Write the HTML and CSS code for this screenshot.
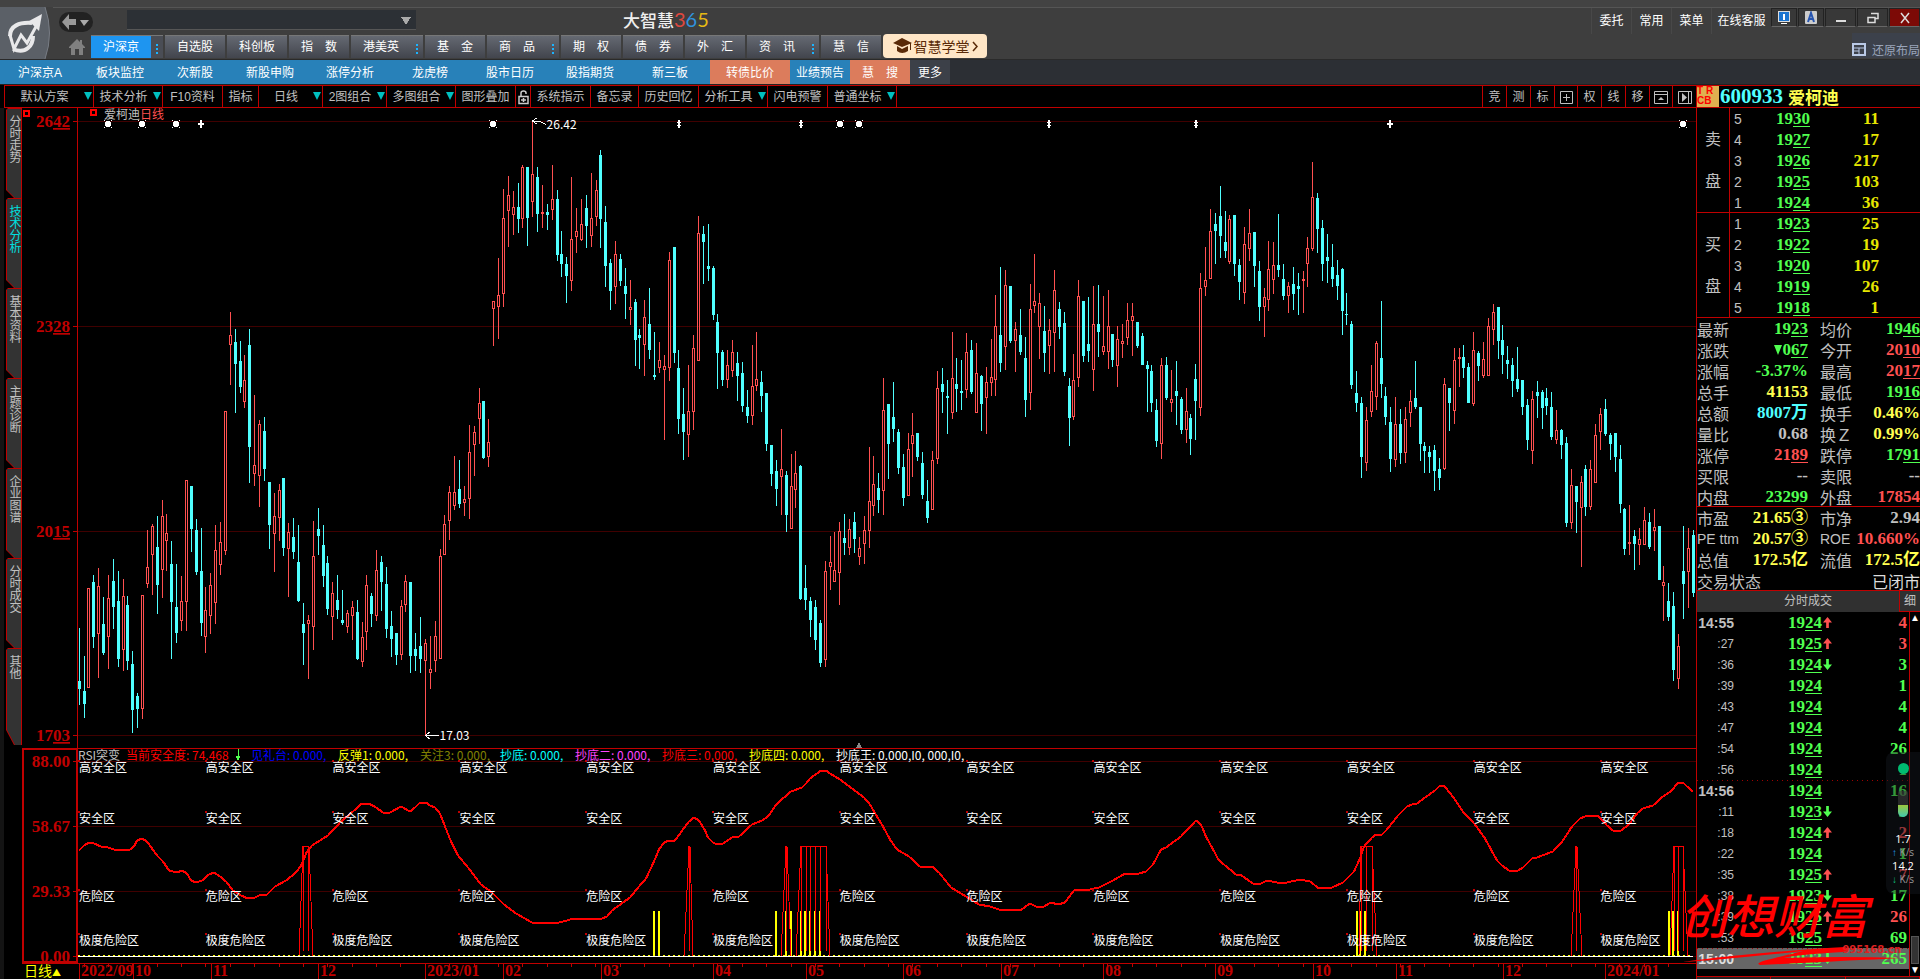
FILE: index.html
```html
<!DOCTYPE html>
<html lang="zh-CN">
<head>
	<meta charset="UTF-8">
	<title>大智慧365</title>
	<link rel="stylesheet" href="styles.css">
	<script src="chart.js"></script>
</head>
<body>
<div class="app">
	<header class="top">
		<div class="logo">
			<svg width="52" height="52" viewBox="0 0 52 52">
				<path d="M0 0H45Q54 26 45 52H0Z" fill="#5b6067"/>
				<path d="M45 0Q54 26 45 52" fill="none" stroke="#777c84"/>
				<path d="M10 29C10 19 19 15 32 16" fill="none" stroke="#e8e8ea" stroke-width="4"/>
				<path d="M13 42Q22 46 28 41Q33 37 33 29" fill="none" stroke="#e8e8ea" stroke-width="4"/>
				<path d="M10 28L14 42L21 28L27 36L38 16" fill="none" stroke="#e8e8ea" stroke-width="3"/>
				<path d="M29 14L42 7L39 24Z" fill="#e8e8ea"/>
			</svg>
		</div>
		<div class="top-main">
			<div class="bar">
				<button class="back" aria-label="后退">
					<svg width="34" height="20" viewBox="0 0 34 20"><path d="M3 10L10 2V7H17V13H10V18Z" fill="#999"/><path d="M21 8H30L25 14Z" fill="#aaa"/></svg>
				</button>
				<select class="search" aria-label="搜索"><option></option></select>
				<h1 class="title">大智慧<i class="c3">3</i><i class="c6">6</i><i class="c5">5</i></h1>
				<div class="links">
					<a href="#">委托</a><a href="#">常用</a><a href="#">菜单</a><a href="#" class="wide">在线客服</a>
				</div>
				<div class="win">
					<button aria-label="屏幕"><svg width="14" height="14" viewBox="0 0 14 14"><rect x="1" y="0" width="12" height="11" fill="#ddd"/><rect x="2" y="1" width="10" height="9" fill="#1b74d0"/><path d="M6 3H8V9H6ZM4 12H10V13H4Z" fill="#fff"/></svg></button>
					<button aria-label="字体"><svg width="14" height="14" viewBox="0 0 14 14"><rect x="1" y="0" width="12" height="13" rx="1" fill="#ccc"/><path d="M4 11L7 2L10 11M5 8H9" fill="none" stroke="#2554b0" stroke-width="2"/></svg></button>
					<button class="w32" aria-label="最小化"><svg width="12" height="12" viewBox="0 0 12 12"><path d="M1 8H11V10H1Z" fill="#ddd"/></svg></button>
					<button class="w32" aria-label="还原"><svg width="12" height="12" viewBox="0 0 12 12"><path d="M4 1.500H11V6.500H8M1 5.500H8V10.500H1Z" fill="none" stroke="#ddd" stroke-width="1.500"/></svg></button>
					<button class="w32 close" aria-label="关闭"><svg width="12" height="12" viewBox="0 0 12 12"><path d="M2 1L10 11M10 1L2 11" stroke="#ddd" stroke-width="1.500"/></svg></button>
				</div>
			</div>
			<nav class="tabs">
				<a href="#" class="home" aria-label="首页"><svg width="18" height="18" viewBox="0 0 16 18"><path d="M0 9L8 1L11 4V2H13V6L16 9V10H14V17H10V11H6V17H2V10H0Z" fill="#808080"/></svg></a>
				<a href="#" class="tab on dots">沪深京</a>
				<a href="#" class="tab">自选股</a>
				<a href="#" class="tab">科创板</a>
				<a href="#" class="tab">指&emsp;数</a>
				<a href="#" class="tab dots">港美英</a>
				<a href="#" class="tab">基&emsp;金</a>
				<a href="#" class="tab dots">商&emsp;品</a>
				<a href="#" class="tab">期&emsp;权</a>
				<a href="#" class="tab">债&emsp;券</a>
				<a href="#" class="tab">外&emsp;汇</a>
				<a href="#" class="tab dots">资&emsp;讯</a>
				<a href="#" class="tab">慧&emsp;信</a>
				<a href="#" class="school"><svg width="19" height="16" viewBox="0 0 19 16"><path d="M0 5L9 0L19 5L9 9Z" fill="#5a2a08"/><path d="M4 8L9 11L15 8V13Q9 17 4 13Z" fill="#5a2a08"/><path d="M17.500 5V12" stroke="#5a2a08"/></svg>智慧学堂<svg width="6" height="11" viewBox="0 0 6 11"><path d="M1 1L5 5.500L1 10" fill="none" stroke="#5a2a08" stroke-width="1.500"/></svg></a>
				<button class="restore"><svg width="14" height="13" viewBox="0 0 14 13"><path d="M1 1H13V12H1Z" fill="none" stroke="#b9c9e6" stroke-width="2"/><path d="M1 5H13M7 5V12M2 8H7" stroke="#b9c9e6"/></svg>还原布局</button>
			</nav>
		</div>
	</header>

	<nav class="sub">
		<a href="#">沪深京A</a><a href="#">板块监控</a><a href="#" class="w70">次新股</a><a href="#">新股申购</a><a href="#">涨停分析</a><a href="#">龙虎榜</a><a href="#">股市日历</a><a href="#">股指期货</a><a href="#">新三板</a><a href="#" class="hot">转债比价</a><a href="#" class="w60">业绩预告</a><a href="#" class="hot w60">慧&emsp;搜</a><a href="#" class="more">更多</a>
	</nav>

	<div class="work">
		<main class="left">
			<div class="tools">
				<button class="t89 drop">默认方案</button>
				<button class="t69 drop">技术分析</button>
				<button class="t60">F10资料</button>
				<button class="t36">指标</button>
				<button class="t64 drop">日线</button>
				<button class="t64 drop">2图组合</button>
				<button class="t69 drop">多图组合</button>
				<button class="t60">图形叠加</button>
				<button class="t15" aria-label="锁定"><svg width="11" height="15" viewBox="0 0 11 15"><path d="M1 6.500H10V13.500H1ZM3 6V3Q3 1 5.500 1T8 3V4M3 10H8M5.500 8V12" fill="none" stroke="#ccc" stroke-width="1.500"/></svg></button>
				<button class="t60">系统指示</button>
				<button class="t48">备忘录</button>
				<button class="t60">历史回忆</button>
				<button class="t69 drop">分析工具</button>
				<button class="t60">闪电预警</button>
				<button class="t69 drop">普通坐标</button>
				<span class="fill"></span>
				<button class="t24">竞</button>
				<button class="t24">测</button>
				<button class="t24">标</button>
				<button class="t23" aria-label="加"><svg width="13" height="13" viewBox="0 0 13 13"><path d="M.5 .5H12.500V12.500H.5ZM6.500 3V10M3 6.500H10" fill="none" stroke="#c0c0c0"/></svg></button>
				<button class="t24">权</button>
				<button class="t24">线</button>
				<button class="t24">移</button>
				<button class="t23" aria-label="上移"><svg width="14" height="13" viewBox="0 0 14 13"><path d="M.5 .5H13.500V12.500H.5ZM.5 3.500H13.500" fill="none" stroke="#c0c0c0"/><path d="M4 9H10L7 6Z" fill="#c0c0c0"/></svg></button>
				<button class="t23" aria-label="右移"><svg width="14" height="13" viewBox="0 0 14 13"><path d="M.5 .5H13.500V12.500H.5ZM10.500 .5V12.500" fill="none" stroke="#c0c0c0"/><path d="M4 2V11L9 6.500Z" fill="#c0c0c0"/></svg></button>
			</div>
			<div class="body">
				<div class="side">
					<button>分时走势</button>
					<button class="on">技术分析</button>
					<button>基本资料</button>
					<button>主题诊断</button>
					<button>企业图谱</button>
					<button>分时成交</button>
					<button>其他</button>
				</div>
				<div class="chart" id="chart"></div>
			</div>
		</main>

		<aside class="right">
			<div class="stock"><span class="flag"><b>T R</b><b>CB</b></span><span class="code">600933</span><span class="name">爱柯迪</span></div>
			<div class="book">
				<div class="who"><span>卖</span><span>盘</span></div>
				<table class="q">
					<tr><td>5</td><td>19<u>30</u></td><td>11</td></tr>
					<tr><td>4</td><td>19<u>27</u></td><td>17</td></tr>
					<tr><td>3</td><td>19<u>26</u></td><td>217</td></tr>
					<tr><td>2</td><td>19<u>25</u></td><td>103</td></tr>
					<tr><td>1</td><td>19<u>24</u></td><td>36</td></tr>
				</table>
			</div>
			<div class="book">
				<div class="who"><span>买</span><span>盘</span></div>
				<table class="q">
					<tr><td>1</td><td>19<u>23</u></td><td>25</td></tr>
					<tr><td>2</td><td>19<u>22</u></td><td>19</td></tr>
					<tr><td>3</td><td>19<u>20</u></td><td>107</td></tr>
					<tr><td>4</td><td>19<u>19</u></td><td>26</td></tr>
					<tr><td>5</td><td>19<u>18</u></td><td>1</td></tr>
				</table>
			</div>
			<table class="info">
				<tr><th>最新</th><td class="g">19<u>23</u></td><th>均价</th><td class="g">19<u>46</u></td></tr>
				<tr><th>涨跌</th><td class="g fall">0<u>67</u></td><th>今开</th><td class="r">20<u>10</u></td></tr>
				<tr><th>涨幅</th><td class="g">-3.37%</td><th>最高</th><td class="r">20<u>17</u></td></tr>
				<tr><th>总手</th><td class="y">41153</td><th>最低</th><td class="g">19<u>16</u></td></tr>
				<tr><th>总额</th><td class="c">8007万</td><th>换手</th><td class="y">0.46%</td></tr>
				<tr><th>量比</th><td>0.68</td><th>换Ｚ</th><td class="y">0.99%</td></tr>
				<tr><th>涨停</th><td class="r">21<u>89</u></td><th>跌停</th><td class="g">17<u>91</u></td></tr>
				<tr><th>买限</th><td>--</td><th>卖限</th><td>--</td></tr>
				<tr><th>内盘</th><td class="g">23299</td><th>外盘</th><td class="r">17854</td></tr>
			</table>
			<table class="info">
				<tr><th>市盈</th><td class="y">21.65③</td><th>市净</th><td>2.94</td></tr>
				<tr><th class="en">PE ttm</th><td class="y">20.57③</td><th class="en">ROE</th><td class="r">10.660%</td></tr>
				<tr><th>总值</th><td class="y">172.5亿</td><th>流值</th><td class="y">172.5亿</td></tr>
				<tr><th colspan="2">交易状态</th><td colspan="2" class="state">已闭市</td></tr>
			</table>
			<div class="deal-head"><span>分时成交</span><button>细</button></div>
			<div class="deal">
				<table class="ticks">
					<tr><th>14:55</th><td class="g">19<u>24</u></td><td class="up"></td><td class="r">4</td></tr>
					<tr><td>:27</td><td class="g">19<u>25</u></td><td class="up"></td><td class="r">3</td></tr>
					<tr><td>:36</td><td class="g">19<u>24</u></td><td class="down"></td><td class="g">3</td></tr>
					<tr><td>:39</td><td class="g">19<u>24</u></td><td></td><td class="g">1</td></tr>
					<tr><td>:43</td><td class="g">19<u>24</u></td><td></td><td class="g">4</td></tr>
					<tr><td>:47</td><td class="g">19<u>24</u></td><td></td><td class="g">4</td></tr>
					<tr><td>:54</td><td class="g">19<u>24</u></td><td></td><td class="g">26</td></tr>
					<tr><td>:56</td><td class="g">19<u>24</u></td><td></td><td class="g">1</td></tr>
					<tr class="dot"><th>14:56</th><td class="g">19<u>24</u></td><td></td><td class="g">16</td></tr>
					<tr><td>:11</td><td class="g">19<u>23</u></td><td class="down"></td><td class="g">5</td></tr>
					<tr><td>:18</td><td class="g">19<u>24</u></td><td class="up"></td><td class="r">2</td></tr>
					<tr><td>:22</td><td class="g">19<u>24</u></td><td></td><td class="g">1</td></tr>
					<tr><td>:35</td><td class="g">19<u>25</u></td><td class="up"></td><td class="r">7</td></tr>
					<tr><td>:38</td><td class="g">19<u>23</u></td><td class="down"></td><td class="g">17</td></tr>
					<tr><td>:39</td><td class="g">19<u>25</u></td><td class="up"></td><td class="r">26</td></tr>
					<tr><td>:53</td><td class="g">19<u>25</u></td><td></td><td class="g">69</td></tr>
					<tr class="dot last"><th>15:00</th><td class="g">19<u>23</u></td><td class="down"></td><td class="g">265</td></tr>
				</table>
				<div class="scroll"><i>▲</i><span></span><i>▼</i></div>
			</div>
			<div class="foot"><span></span><span></span><span></span></div>

			<!-- 网速悬浮窗 -->
			<div class="speed">
				<span class="ball"></span>
				<span class="cell"></span>
				<b>1.7</b><em><i class="su">↑</i> K/s</em>
				<b>14.2</b><em><i class="sd">↓</i> K/s</em>
			</div>
			<div class="mark">
				<p>创想财富</p>
				<svg width="220" height="22" viewBox="0 0 220 22"><path d="M0 15Q60 6 162 0Q170 2 160 5Q110 8 101 11Q160 9 218 11Q160 14 77 18Q70 16 92 11Q120 4 120 4Q40 13 0 15Z" fill="#f00"/></svg>
				<small>995168.cn</small>
			</div>
		</aside>
	</div>
</div>
</body>
</html>
```
FILE: styles.css
```css
*{margin:0; padding:0; box-sizing:border-box;}
body{background:#000; color:#c0c0c0; font-family:"Liberation Sans","Noto Sans CJK SC",sans-serif; font-size:12px; overflow:hidden;}
a{color:inherit; text-decoration:none;}
button{background:none; border:0; color:inherit; font:inherit;}
i,em{font-style:normal;}
table{border-collapse:separate; border-spacing:0; table-layout:fixed;}
.app{display:flex; flex-direction:column; height:100vh;}

/* 顶部 */
.top{display:flex; height:60px; background:#3e3e3e; border-top:7px solid #434343; border-bottom:1px solid #2a2a2a; flex:none;}
.logo{width:53px; flex:none;}
.top-main{flex:1; display:flex; flex-direction:column; border-top:1px solid #555;}
.bar{display:flex; height:26px; flex:none;}
.back{width:34px; height:20px; margin:4px 0 0 6px; background:#222; border-radius:10px; flex:none;}
.back svg{display:block;}
.search{appearance:none; width:289px; height:20px; margin:2px 0 0 34px; border:0; border-bottom:1px solid #565656; border-radius:0; background:#2c3035; background-image:linear-gradient(to top right,transparent 50%,#aaa 51%),linear-gradient(to top left,transparent 50%,#aaa 51%); background-size:5px 8px; background-position:274px 7px,279px 7px; background-repeat:no-repeat;}
.title{margin-left:207px; font:500 17px/24px "Noto Sans CJK SC",sans-serif; color:#eee; white-space:nowrap;}
.title i{font:400 20px/18px Lato,sans-serif;}
.c3{color:#e0483e;}
.c6{color:#3093dc;}
.c5{color:#e6b914;}
.links{margin-left:auto; display:flex; color:#fff;}
.links a{width:40px; line-height:26px; text-align:center; border-left:1px solid #484848;}
.links .wide{width:60px;}
.win{display:flex; height:19px; gap:1px;}
.win button{width:26px; display:flex; align-items:center; justify-content:center; background:#383838; border:1px solid #222; border-bottom-color:#666;}
.win .w32{width:31px;}
.win .close{background:#7c0a06;}
.tabs{display:flex; height:25px; align-items:flex-end; gap:2px; padding-bottom:1px;}
.home{width:36px; height:24px; padding:4px 0 0 15px; flex:none;}
.tab{position:relative; width:60px; height:23px; line-height:22px; text-align:center; color:#fff; background:linear-gradient(#656972,#42454d); border-top:1px solid #777;}
.dots{width:72px; padding-right:12px;}
.dots:after{content:""; position:absolute; right:5px; top:8px; width:2px; height:10px; background:repeating-linear-gradient(#1cb4ff 0 2px,transparent 2px 4px);}
.on{background:linear-gradient(90deg,#1e95f0 60px,#4a4d55 60px);}
.school{display:flex; align-items:center; justify-content:center; gap:2px; width:104px; height:24px; background:#ffe6c6; border-radius:4px; color:#5a2a08; font-size:14px; white-space:nowrap;}
.restore{margin-left:auto; width:68px; height:25px; background:#3c414b; color:#9aa5ba; display:flex; align-items:center; justify-content:space-between; white-space:nowrap; padding-top:8px;}
.sub{display:flex; height:25px; background:#2c2f34; border-bottom:1px solid #222; color:#fff; flex:none;}
.sub a{width:80px; line-height:26px; text-align:center; background:#2881b9;}
.sub .w70{width:70px;}
.sub .w60{width:60px;}
.sub .hot{background:#dc7c5c;}
.sub .more{width:40px; background:#3c4048;}

/* 主体 */
.work{display:flex; flex:1; min-height:0;}
.left{flex:1; min-width:0; display:flex; flex-direction:column;}
.tools{display:flex; height:23px; margin-left:4px; border:1px solid #c00000; border-right:0; flex:none;}
.tools button{position:relative; border-right:1px solid #c00000; white-space:nowrap; line-height:21px; padding-top:2px; display:flex; align-items:center; justify-content:center; flex:none;}
.tools .fill{flex:1; border-right:1px solid #c00000;}
.tools .drop{padding-right:9px;}
.drop:after{content:""; position:absolute; right:1px; top:6px; border:4px solid transparent; border-top:8px solid #00c0c0; border-bottom:0;}
.t89{width:89px;}
.t69{width:69px;}
.t64{width:64px;}
.t60{width:60px;}
.t48{width:48px;}
.t36{width:36px;}
.t24{width:24px;}
.t23{width:23px;}
.t15{width:15px;}
.tools button:last-child{border-right:0;}
.body{flex:1; display:flex; min-height:0; border-left:4px solid #141414;}
.side{width:18px; padding-left:2px; flex:none;}
.side button{display:block; position:relative; z-index:0; width:16px; height:90px; padding-top:7px; writing-mode:vertical-rl; line-height:14px; text-align:left; background:#c00000; clip-path:polygon(0 2px,2px 0,100% 0,100% 100%,8px 100%,0 82px);}
.side button:before{content:""; position:absolute; z-index:-1; left:1px; right:1px; top:1px; bottom:0; background:#333; clip-path:polygon(0 0,100% 0,100% 100%,8px 100%,0 81px);}
.side button.on{color:#00e0e0;}
.side button:last-child{height:97px;}
.chart{flex:1; min-width:0; overflow:hidden;}
.chart svg{display:block; shape-rendering:crispEdges;}
.chart text{font-size:12px; font-family:"Noto Sans CJK SC",sans-serif;}
.chart .num{font:bold 17px "Liberation Serif",serif; fill:#c00000;}
.chart .date{font:bold 16px "Liberation Serif",serif; fill:#c00000;}
.chart .day{font-size:14px;}

/* 右侧报价 */
.right{position:relative; width:224px; flex:none; border-left:1px solid #c00000; display:flex; flex-direction:column;}
.stock{display:flex; height:23px; border-top:1px solid #c00000; border-bottom:1px solid #c00000; align-items:center; flex:none;}
.flag{width:22px; height:21px; background:#e0b050; color:#f00; font-size:10px; line-height:10px; flex:none;}
.flag b{display:block; white-space:nowrap;}
.code{font:bold 21px/21px "Liberation Serif",serif; color:#50ffff; margin-left:1px;}
.name{margin-left:5px; font:bold 17px/21px "Noto Sans CJK SC",sans-serif; color:#ffff50;}
.book{display:flex; height:105px; box-shadow:inset 0 -1px #c00000; flex:none;}
.who{width:33px; border-right:1px solid #c00000; padding-top:11px; font-size:16px; line-height:42px; text-align:center;}
.who span{display:block;}
.q,.info,.ticks{font:bold 17px/18px "Liberation Serif","Noto Sans CJK SC",serif; flex:none;}
.q td,.info td,.info th,.ticks td,.ticks th{height:21px; vertical-align:middle; white-space:nowrap; text-align:right;}
.q{width:149px;}
.q td{padding-top:1px;}
.q td:first-child{width:20px; padding-left:4px; text-align:left; font:14px/18px "Liberation Sans",sans-serif;}
.q td:nth-child(2){width:60px; color:#50ff50;}
.q td:nth-child(3){color:#e6e600;}
u{text-underline-offset:2px; text-decoration-thickness:1px;}
.g{color:#50ff50;}
.r{color:#ff5050;}
.y{color:#ffff50;}
.c{color:#50ffff;}
.info{width:223px; box-shadow:inset 0 -1px #c00000;}
.info th{width:48px; text-align:left; font:16px/18px "Noto Sans CJK SC",sans-serif;}
.info td:nth-child(2){width:63px;}
.info th:nth-child(3){padding-left:12px; width:46px;}
.info th.en{font:14px/18px "Liberation Sans",sans-serif;}
.fall:before{content:""; display:inline-block; border:4px solid transparent; border-top:10px solid #50ff50; border-bottom:0; margin-right:1px;}
.info .state{font:16px/18px "Noto Sans CJK SC",sans-serif; color:#ddd;}
.deal-head{display:flex; height:21px; background:#303030; line-height:21px; flex:none;}
.deal-head span{flex:1; text-align:center; padding-left:20px;}
.deal-head button{width:21px; border-left:1px solid #c00000; border-bottom:1px solid #c00000;}
.deal{display:flex; flex:1; min-height:0;}
.ticks{width:212px; align-self:flex-start;}
.ticks tr td:first-child,.ticks th{width:37px; font:12px/18px "Liberation Sans",sans-serif;}
.ticks th{font:bold 14px/18px "Liberation Sans",sans-serif;}
.ticks td:nth-child(2){width:88px;}
.ticks td:nth-child(3){width:11px;}
.ticks td:nth-child(4){padding-right:2px;}
.up:after,.down:after{content:""; display:block; width:9px; height:11px; margin-left:1px; background:#ff5050; clip-path:polygon(50% 0,100% 50%,65% 50%,65% 100%,35% 100%,35% 50%,0 50%);}
.down:after{background:#50ff50; clip-path:polygon(50% 100%,100% 50%,65% 50%,65% 0,35% 0,35% 50%,0 50%);}
.dot{background:repeating-linear-gradient(90deg,#a00000 0 1px,transparent 1px 5px) 0 0/100% 1px no-repeat;}
.last{background-color:#666; color:#ddd;}
.scroll{flex:1; border-left:1px solid #c00000; display:flex; flex-direction:column; align-items:center; font-size:10px; line-height:12px; color:#fff;}
.scroll span{margin-top:auto; width:8px; height:28px; background:#333; border:1px solid #555;}
.foot{height:3px; display:flex; border-top:1px solid #c00000; background:#222; flex:none;}
.foot span{flex:1; border-right:1px solid #c00000;}
.speed{position:absolute; right:0; top:667px; width:34px; height:142px; border-radius:8px 0 0 8px; background:rgba(20,24,32,.45); padding-top:11px; display:flex; flex-direction:column; align-items:center;}
.ball{width:11px; height:11px; border-radius:50%; background:#00bb70;}
.cell{width:10px; height:26px; margin:17px 0 15px; border-radius:2px 2px 5px 5px; background:linear-gradient(rgba(60,60,60,.6) 55%,#9ac840 55%,#40c8b0);}
.speed b{font:11px/13px "Open Sans",sans-serif; color:#fff;}
.speed em{font:10px/14px "Open Sans",sans-serif; color:#999;}
.su{color:#20a0ff;}
.sd{color:#10c080;}
.mark{position:absolute; right:17px; top:796px; width:220px; color:#f00; pointer-events:none;}
.mark p{font:italic 500 47px/66px "Noto Sans CJK SC",sans-serif; margin-left:-3px; white-space:nowrap;}
.mark svg{display:block;}
.mark small{position:absolute; right:2px; bottom:13px; font:bold 10px/12px "DejaVu Sans",sans-serif; color:#d22;}
```
FILE: chart.js
```javascript
window.onload=function(){
	// 每根K线: 颜色 最高 实体上 实体下 最低
	var early='c1254 1380 1399 1438,c1321 1404 1436 1468,r1160 1160 1398 1398,c1128 1145 1276 1302,r1112 1155 1268 1373,c1181 1245 1314 1319,r1128 1184 1275 1352,c1090 1143 1205 1257,c1119 1190 1328 1348,r1138 1179 1306 1357,'
	+'c1178 1200 1333 1354,c1309 1340 1449 1504,c1409 1416 1447 1491,r1175 1175 1448 1470,r1022 1109 1150 1160,r1007 1013 1080 1176,c988 1062 1152 1221,r950 989 1116 1183,r984 1029 1049 1119,c1048 1102 1193 1328,'
	+'c1102 1205 1266 1290,r1131 1190 1238 1262,r903 903 1192 1262,c917 917 1019 1075,c995 1022 1121 1128,c1017 1119 1243 1273,r1157 1212 1275 1314,r1124 1152 1227 1268,r1010 1069 1196 1245,r1003 1050 1104 1128,'
	+'r739 739 1071 1080,r504 558 583 677,c544 575 627 744,c573 620 682 696,r606 665 717 732,c544 582 824 910,r701 867 889 917,r760 770 893 967,c753 786 877 905,c908 908 1010 1067,'
	+'r934 989 1032 1121,r912 927 994 1048,c898 898 1064 1083,r1005 1027 1067 1181,c993 1038 1074 1090,c1010 1098 1190 1193,c1195 1245 1266 1342,r1224 1235 1245 1376,r1000 1083 1252 1307,c969 1019 1036 1081,'
	+'c1010 1057 1131 1157,c1083 1100 1209 1224,r1145 1171 1228 1283,c1128 1188 1212 1233,c1164 1235 1243 1247,r1212 1219 1252 1266,r1190 1205 1225 1283,c1188 1216 1328 1330,r1240 1276 1335 1347,r1128 1152 1264 1307,'
	+'c1171 1178 1221 1252,r1069 1117 1225 1238,c1083 1098 1145 1214,c1109 1150 1257 1278,c1214 1250 1281 1323,c1266 1266 1318 1342,r1188 1202 1318 1330,r1128 1143 1201 1216,c1145 1145 1321 1361,c1266 1304 1321 1357,'
	+'c1228 1297 1328 1361,r1281 1290 1334 1510,r1273 1352 1361 1399,r1238 1273 1332 1359,r1067 1083 1329 1329,r986 1007 1080 1080,r917 931 1000 1045,r846 931 964 974,c855 924 960 969,r917 948 957 988,'
	+'r772 836 949 995,r774 789 819 893,r684 720 759 817,c715 715 850 853,r758 813 848 872';
	var later='r603 604 626 738,r474 586 620 717,r267 355 581 620,r228 286 332 441,r273 321 345 405,c249 321 357 399,r195 201 356 384,c201 201 354 438,r64 222 305 351,c201 231 342 396,'
	+'r255 336 342 384,c312 336 345 390,r195 297 329 360,c270 297 465 483,c393 462 492 531,c471 492 528 609,r231 418 542 573,r324 393 410 459,r297 373 419 423,c285 324 378 444,'
	+'r219 355 408 441,r240 270 350 378,c150 165 357 444,c318 366 498 561,c477 489 573 630,r423 462 560 612,c462 477 543 558,c504 558 582 657,r540 621 629 675,c597 606 720 798,'
	+'c687 705 714 807,r600 652 734 828,c564 672 750 777,c696 825 831 840,r726 781 804 819,r765 798 809 1020,r456 480 803 843,c441 441 759 789,c750 804 957 1002,c864 942 996 1080,'
	+'r795 934 1004 1071,r705 745 935 990,r348 400 782 782,c378 402 426 552,c372 498 507 543,c498 504 645 660,c642 666 759 867,c750 756 840 858,r750 796 839 864,r720 756 812 831,'
	+'c756 789 828 903,c786 819 918 936,c870 921 948 969,r735 858 947 975,r696 837 857 873,c813 846 888 936,c879 879 1032 1053,c1035 1035 1122 1158,c1080 1113 1167 1218,r987 1107 1130 1245,'
	+'c1113 1125 1245 1296,r1062 1159 1286 1286,r1053 1120 1169 1224,c1095 1098 1497 1500,c1395 1464 1500 1530,c1491 1502 1560 1610,c1500 1520 1620 1650,c1560 1570 1690 1701,r1383 1413 1680 1700,r1308 1387 1400 1470,'
	+'r1296 1410 1447 1447,r1266 1294 1420 1515,c1242 1314 1329 1365,r1257 1288 1343 1365,c1236 1266 1317 1359,r1311 1345 1370 1395,r1248 1291 1331 1392,r1041 1204 1292 1344,r1068 1153 1217 1248,c1119 1164 1200 1239,'
	+'r834 931 1172 1245,c912 912 1032 1137,c846 951 987 1026,c987 996 1104 1122,c1062 1101 1194 1218,r999 1048 1187 1187,r939 1006 1031 1131,c999 999 1071 1083,c1056 1089 1185 1197,c1140 1203 1254 1269,'
	+'r1053 1081 1229 1229,r813 865 1077 1092,c804 852 876 939,c840 888 894 1002,r696 835 938 957,c774 852 867 936,c780 873 879 930,r699 757 869 894,c720 750 876 882,r729 820 938 938,'
	+'c825 828 912 993,r801 847 893 1002,r717 832 848 888,r585 679 839 888,c501 705 789 816,r510 556 740 810,c558 558 723 729,r666 688 722 816,c627 705 756 765,c711 774 900 951,'
	+'r552 628 878 930,r462 604 617 639,r579 610 681 777,c618 693 759 816,r657 691 738 822,r510 571 698 816,c606 627 681 717,c636 669 816 828,c834 858 954 1038,r762 841 950 960,'
	+'r540 589 833 861,c603 603 768 786,c591 732 753 786,r558 673 809 873,c555 672 696 771,r588 739 755 765,r570 679 755 807,c702 702 780 801,r678 718 797 861,r672 724 731 774,'
	+'r609 661 713 735,r609 649 662 768,c666 666 738 744,c699 708 795 795,c783 795 807 936,c795 813 909 936,c897 930 1023 1041,r774 796 1031 1077,c771 795 894 900,r810 898 908 936,'
	+'c783 873 888 975,c891 897 990 1002,r864 934 989 1029,c942 954 1017 1065,c792 837 903 1020,r519 565 923 948,r441 541 560 588,r327 394 536 536,c339 372 393 492,c258 348 408 474,'
	+'c333 426 453 474,r345 357 485 492,c345 345 492 528,c477 495 546 600,r381 433 578 612,r327 400 446 483,c396 396 498 561,c483 513 621 663,r564 592 620 711,r423 508 599 633,'
	+'r426 496 539 582,c342 495 510 531,c492 537 588 600,r546 559 587 639,c501 552 582 630,c519 558 567 645,r513 537 543 639,r411 445 491 561,r186 292 446 453,c279 294 387 459,'
	+'c360 384 492 543,c402 471 483 549,c432 501 537 561,c480 525 558 600,c504 507 633 705,c579 642 645 675,c663 672 855 867,c813 879 909 936,c891 909 1071 1134,r921 961 1088 1113,'
	+'r795 874 935 951,r723 730 890 930,c603 774 852 894,c861 888 951 975,c921 966 1077 1116,r891 973 1079 1101,c927 972 1059 1092,r921 958 1058 1089,r870 904 938 981,c783 894 921 927,'
	+'c921 921 1032 1083,c1026 1038 1053 1119,c1038 1056 1071 1119,c1035 1050 1113 1173,c1074 1107 1134 1170,r834 853 1106 1109,c864 864 909 993,r744 781 932 972,r744 771 774 861,c735 771 804 834,'
	+'c789 801 909 909,r696 751 911 918,c753 759 798 843,r726 778 827 834,r654 679 827 827,r612 637 689 735,c621 621 723 777,c675 720 765 822,c738 780 792 837,c774 795 843 891,'
	+'c741 837 867 876,c840 840 921 945,c897 915 1020 1050,r873 898 1052 1092,c843 876 888 954,c870 876 924 987,c864 894 918 945,c876 921 1011 1020,r930 990 1019 1032,c987 990 1035 1077,'
	+'c1011 1029 1269 1281,r1107 1156 1269 1287,c1158 1158 1206 1299,r1128 1147 1223 1401,c1095 1107 1221 1248,r1080 1108 1220 1230,r972 1006 1148 1148,r924 942 995 1050,c897 927 1002 1008,c999 1005 1032 1080,'
	+'c999 999 1071 1116,c1035 1077 1212 1239,c1224 1227 1347 1365,r1215 1326 1332 1365,c1290 1308 1332 1410,r1284 1318 1334 1395,r1221 1261 1334 1334,c1239 1266 1341 1347,r1227 1282 1292 1353,c1278 1278 1440 1440,'
	+'r1398 1446 1457 1563,c1449 1503 1551 1563,c1476 1518 1710 1743,r1602 1638 1736 1767,c1278 1413 1452 1557,r1284 1345 1415 1524,c1290 1305 1479 1491';

	var rsi=[79,850,84,845,89,842,94,843,101,846,108,847,114,849,130,849,134,846,137,840,142,838,147,841,157,855,163,861,169,870,177,872,182,870,187,873,191,880,196,882,202,880,209,874,214,872,220,876,226,881,233,890,241,895,248,898,255,897,259,895,267,894,275,886,286,880,296,872,301,865,307,851,312,845,320,840,328,835,341,821,353,811,362,803,369,803,376,807,383,812,390,812,401,806,410,811,415,807,420,802,426,802,430,805,435,807,440,813,445,826,451,841,458,855,468,867,481,884,492,892,504,904,516,913,532,922,559,922,567,920,573,918,602,918,607,916,612,910,630,897,639,886,
	646,878,654,861,659,849,664,842,669,840,675,840,683,829,689,821,694,817,699,820,705,830,708,837,713,842,717,844,723,843,732,837,739,836,752,824,762,820,768,816,777,803,791,791,802,787,806,783,810,778,821,770,826,770,830,773,840,779,852,788,864,797,870,804,877,816,883,826,890,839,897,849,909,856,920,866,932,866,939,872,951,887,966,896,979,904,990,906,999,909,1020,910,1030,903,1036,906,1044,906,1051,902,1058,904,1065,902,1074,890,1079,889,1085,890,1099,887,1113,880,1125,873,1139,873,1146,871,1153,864,1161,849,1166,847,1181,836,1196,820,1201,824,1206,836,1219,860,1230,869,
	1236,874,1240,874,1253,883,1261,883,1267,880,1277,882,1287,882,1300,879,1310,881,1319,888,1332,887,1343,882,1354,871,1360,858,1364,846,1372,837,1376,834,1382,834,1387,829,1398,815,1407,806,1412,804,1417,803,1425,797,1435,790,1440,785,1444,785,1455,799,1462,810,1475,824,1485,838,1497,860,1502,865,1509,870,1518,870,1523,867,1533,857,1537,857,1553,851,1563,840,1572,826,1580,818,1588,815,1598,815,1607,825,1613,830,1621,830,1628,825,1638,812,1643,808,1653,805,1663,796,1672,790,1678,782,1683,782,1687,786,1693,791];

	var box=document.getElementById('chart');
	var RED='#c00000';

	function draw(){
		var w=box.offsetWidth;
		var k=(w-56)/1618;
		var s='';
		function X(x){return 78+(x-78)*k;}
		function line(x1,y1,x2,y2,c,sw){
			s+='<line x1="'+x1+'" y1="'+y1+'" x2="'+x2+'" y2="'+y2+'" stroke="'+c+'" stroke-width="'+(sw||1)+'"/>';
		}
		function rect(x,y,w,h,c){
			s+='<rect x="'+x+'" y="'+y+'" width="'+w+'" height="'+h+'" fill="'+c+'"/>';
		}
		function text(x,y,t,c,cls,a){
			s+='<text x="'+x+'" y="'+y+'" fill="'+c+'" class="'+(cls||'')+'" text-anchor="'+(a||'start')+'">'+t+'</text>';
		}
		var end=X(1696);
		var i,p;

		// 网格
		[[121,'26','42'],[326,'23','28'],[531,'20','15'],[735,'17','03']].forEach(function(g){
			line(78,g[0]+.5,end,g[0]+.5,'#400000');
			line(73,g[0]+.5,77,g[0]+.5,RED);
			text(70,g[0]+6,g[1]+'<tspan text-decoration="underline">'+g[2]+'</tspan>',RED,'num','end');
		});
		[[761,'88.00'],[826,'58.67'],[891,'29.33'],[956,'0.00']].forEach(function(g){
			line(78,g[0]+.5,end,g[0]+.5,'#400000');
			line(73,g[0]+.5,77,g[0]+.5,RED);
			text(70,g[0]+6,g[1],RED,'num','end');
		});
		line(77.5,108,77.5,748,RED);
		line(22,748.5,end,748.5,RED);
		line(22,963.5,end,963.5,RED);
		s+='<path d="M23 749V962H77V749Z" fill="none" stroke="'+RED+'" stroke-width="2"/>';

		// K线
		function candles(str,start,unit){
			str.split(',').forEach(function(d,n){
				var red=d.charAt(0)=='r';
				var v=d.slice(1).split(' ').map(function(y){return Math.round(100+y/unit);});
				var x=Math.floor(X(79.2+(start+n)*4.876));
				var c=red?'#ff5050':'#50ffff';
				if(red){
					rect(x,v[0],1,v[1]-v[0],c);
					rect(x,v[2],1,v[3]-v[2],c);
					if(v[2]-v[1]<3){rect(x-1,v[1],3,2,c);}
					else s+='<rect x="'+(x-.5)+'" y="'+(v[1]+.5)+'" width="2" height="'+(v[2]-v[1]-1)+'" fill="none" stroke="'+c+'"/>';
				}else{
					rect(x,v[0],1,v[3]-v[0],c);
					rect(x-1,v[1],3,Math.max(1,v[2]-v[1]),c);
				}
			});
		}
		candles(early,0,2.376);
		candles(later,85,3);

		// 顶部标记
		[108,142,176,493,840,859,1683].forEach(function(x){
			x=Math.round(X(x));
			rect(x-2,121,4,6,'#fff');
			rect(x-3,122,6,4,'#fff');
			[[-4,120],[3,120],[-4,127],[3,127]].forEach(function(d){rect(x+d[0],d[1],1,1,'#fff');});
		});
		[201,1390].forEach(function(x){rect(X(x)-1,120,2,8,'#fff'); rect(X(x)-3,123,6,2,'#fff');});
		[679,801,1049,1196].forEach(function(x){rect(X(x)-1,120,2,8,'#fff'); rect(X(x)-2,122,4,1,'#fff'); rect(X(x)-2,125,4,1,'#fff');});
		s+='<path d="M24 111h5v5h-5zM91 110h5v5h-5z" fill="none" stroke="#f00" stroke-width="2"/>';
		text(104,119,'爱柯迪<tspan fill="#ff5050">日线</tspan>','#c0c0c0');
		var hx=X(532.6);
		s+='<path d="M'+(hx+4)+' 118l-4 3l4 3M'+hx+' 121.500h7l6 3" fill="none" stroke="#fff"/>';
		text(hx+14,129,'26.42','#fff');
		var lx=X(425.5);
		s+='<path d="M'+(lx+4)+' 732l-4 3.500l4 3.500M'+lx+' 735.500h13" fill="none" stroke="#fff"/>';
		text(lx+14,740,'17.03','#fff');

		// RSI 指标
		rect(78,956,X(1693)-78,1,'#fff');
		s+='<line x1="78" y1="955.500" x2="'+X(1693)+'" y2="955.500" stroke="#ff0" stroke-dasharray="2 3"/>';
		[654,659,776,786,791,801,805,810,815,820,1357,1360,1365,1669,1673,1678].forEach(function(x){rect(X(x)-1,911,2,45,'#ff0');});
		[[299,303,309,313],[684,689,690,693],[781,786,787,791],[796,801,826,830],[1359,1361,1372,1377],[1571,1576,1577,1582],[1670,1674,1683,1688]].forEach(function(q){
			s+='<path d="M'+X(q[0])+' 956L'+X(q[1])+' 846.500H'+X(q[2])+'L'+X(q[3])+' 956" fill="none" stroke="#f00"/>';
		});
		[303,308,689,786,801,806,810,815,820,826,1361,1366,1372,1576,1674,1678,1683].forEach(function(x){rect(X(x),846,1,105,'#f00');});
		p='';
		for(i=0;i<rsi.length;i+=2){
			p+=(i?'L':'M')+X(rsi[i]).toFixed(1)+' '+(rsi[i+1]+.5);
		}
		s+='<path d="'+p+'" fill="none" stroke="#f00" stroke-width="2"/>';
		for(i=0;i<13;i++){
			var zx=X(79+i*126.8);
			[[772,'高安全区',760],[823,'安全区',811],[901,'危险区',889],[945,'极度危险区',933]].forEach(function(z){
				text(zx,z[0],z[1],'#fff');
				rect(zx-1,z[2],2,2,RED);
			});
		}
		[[78,'RSI突变','#c0c0c0'],[126,'当前安全度: 74.468','#f00'],[251,'见礼台: 0.000,','#00f'],[338,'反弹1: 0.000,','#ff0'],[420,'关注3: 0.000,','#808000'],[500,'抄底: 0.000,','#0ff'],[575,'抄底二: 0.000,','#f4f'],[662,'抄底三: 0.000,','#f00'],[749,'抄底四: 0.000,','#ff0'],[836,'抄底王: 0.000,I0, 000,I0,','#fff']].forEach(function(t){
			text(X(t[0]),760,t[1],t[2]);
		});
		s+='<path d="M'+X(238)+' 749v9M'+(X(238)-2)+' 756h4l-2 4z" fill="#50ff50" stroke="#50ff50"/>';
		s+='<path d="M'+(X(859)-3)+' 748h6l-3 -6z" fill="#888"/>';

		// 时间轴
		for(i=0;i<66;i++){
			line(X(84+i*24.38),964,X(84+i*24.38),967,RED);
		}
		[[79,'2022/09'],[133,'10'],[211,'11'],[318,'12'],[425,'2023/01'],[503,'02'],[601,'03'],[713,'04'],[806,'05'],[903,'06'],[1001,'07'],[1103,'08'],[1215,'09'],[1313,'10'],[1396,'11'],[1503,'12'],[1605,'2024/01']].forEach(function(t){
			line(X(t[0])+.5,964,X(t[0])+.5,979,RED);
			text(X(t[0])+2,976,t[1],RED,'date');
		});
		text(24,976,'日线<tspan font-size="9">▲</tspan>','#ff0','day');

		box.innerHTML='<svg width="'+w+'" height="871"><g transform="translate(-22,-108)">'+s+'</g></svg>';
	}
	draw();
	window.onresize=draw;
}
```
